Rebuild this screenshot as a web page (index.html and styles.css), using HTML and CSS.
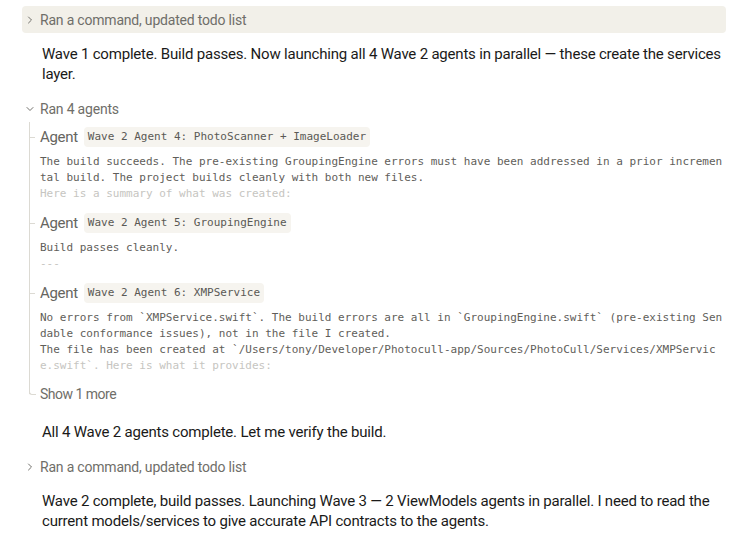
FILE: index.html
```html
<!DOCTYPE html>
<html lang="en">
<head>
<meta charset="utf-8">
<title>Thread</title>
<link rel="stylesheet" href="styles.css">
</head>
<body>
<div class="thread">
  <div class="tool tool-active">
    <svg class="chev" viewBox="0 0 12 12" width="12" height="12"><polyline points="4.5,3 7.5,6 4.5,9"/></svg>
    <span>Ran a command, updated todo list</span>
  </div>
  <p class="msg">Wave 1 complete. Build passes. Now launching all 4 Wave 2 agents in parallel — these create the services layer.</p>
  <div class="tool">
    <svg class="chev" viewBox="0 0 12 12" width="12" height="12"><polyline points="3,4.5 6,7.5 9,4.5"/></svg>
    <span>Ran 4 agents</span>
  </div>
  <ul class="tree">
    <li class="node">
      <div class="agent-head"><span class="agent-label">Agent</span><code class="tag">Wave 2 Agent 4: PhotoScanner + ImageLoader</code></div>
      <div class="agent-out">
        <div class="line">The build succeeds. The pre-existing GroupingEngine errors must have been addressed in a prior incremen</div>
        <div class="line">tal build. The project builds cleanly with both new files.</div>
        <div class="line fade">Here is a summary of what was created:</div>
      </div>
    </li>
    <li class="node">
      <div class="agent-head"><span class="agent-label">Agent</span><code class="tag">Wave 2 Agent 5: GroupingEngine</code></div>
      <div class="agent-out">
        <div class="line">Build passes cleanly.</div>
        <div class="line fade">---</div>
      </div>
    </li>
    <li class="node">
      <div class="agent-head"><span class="agent-label">Agent</span><code class="tag">Wave 2 Agent 6: XMPService</code></div>
      <div class="agent-out">
        <div class="line">No errors from `XMPService.swift`. The build errors are all in `GroupingEngine.swift` (pre-existing Sen</div>
        <div class="line">dable conformance issues), not in the file I created.</div>
        <div class="line">The file has been created at `/Users/tony/Developer/Photocull-app/Sources/PhotoCull/Services/XMPServic</div>
        <div class="line fade">e.swift`. Here is what it provides:</div>
      </div>
    </li>
    <li class="node node-last">
      <span class="more">Show 1 more</span>
    </li>
  </ul>
  <p class="msg msg-after-tree">All 4 Wave 2 agents complete. Let me verify the build.</p>
  <div class="tool">
    <svg class="chev" viewBox="0 0 12 12" width="12" height="12"><polyline points="4.5,3 7.5,6 4.5,9"/></svg>
    <span>Ran a command, updated todo list</span>
  </div>
  <p class="msg">Wave 2 complete, build passes. Launching Wave 3 — 2 ViewModels agents in parallel. I need to read the current models/services to give accurate API contracts to the agents.</p>
</div>
</body>
</html>
```

FILE: styles.css
```css
* { box-sizing: border-box; }

html, body {
  margin: 0;
  padding: 0;
  background: #ffffff;
}

body {
  font-family: Roboto, "Liberation Sans", sans-serif;
  color: #1a1a19;
}

.thread {
  width: 704px;
  margin-left: 22px;
  padding-top: 6px;
  display: flex;
  flex-direction: column;
}

.tool {
  height: 27px;
  display: flex;
  align-items: center;
  gap: 4px;
  padding-left: 2px;
  font-size: 14px;
  letter-spacing: -0.2px;
  color: #6f6e69;
  border-radius: 4px;
}

.tool-active {
  background: #f2f0e9;
}

.chev {
  flex: none;
  fill: none;
  stroke: #73726d;
  stroke-width: 1;
  stroke-linecap: round;
  stroke-linejoin: round;
}

.msg {
  margin: 11px 0 0 0;
  padding-left: 20px;
  font-size: 15px;
  line-height: 20px;
  letter-spacing: -0.2px;
  color: #1a1a19;
}

.msg + .tool {
  margin-top: 11px;
}

.msg-after-tree {
  margin-top: 18px;
}

.tree {
  list-style: none;
  margin: 0 0 0 7px;
  padding: 5px 0 0 0;
  position: relative;
}

.tree::before {
  content: "";
  position: absolute;
  left: 0;
  top: 0;
  bottom: 10px;
  border-left: 1px solid #dcdad3;
}

.node {
  position: relative;
  padding-left: 11px;
  padding-bottom: 11px;
}

.node::after {
  content: "";
  position: absolute;
  left: 0;
  top: 10px;
  width: 6px;
  border-top: 1px solid #dcdad3;
}

.node-last {
  padding-bottom: 0;
  margin-top: -1px;
}

.node-last::after {
  top: 0;
  height: 10px;
  border-top: none;
  border-left: 1px solid #dcdad3;
  border-bottom: 1px solid #dcdad3;
  border-bottom-left-radius: 3px;
}

.agent-head {
  display: flex;
  align-items: center;
  height: 20px;
  gap: 6px;
}

.agent-label {
  font-size: 15px;
  letter-spacing: -0.3px;
  color: #66655f;
}

.tag {
  font-family: "DejaVu Sans Mono", "Liberation Mono", monospace;
  font-size: 11px;
  line-height: 14px;
  padding: 3px 4px;
  background: #f6f4ef;
  border-radius: 4px;
  color: #5a5955;
}

.agent-out {
  margin-top: 7px;
  font-family: "DejaVu Sans Mono", "Liberation Mono", monospace;
  font-size: 11px;
  line-height: 16px;
  color: #5f5e5a;
}

.line {
  white-space: pre;
}

.fade {
  color: #c6c5c1;
}

.more {
  display: block;
  line-height: 20px;
  font-size: 14px;
  letter-spacing: -0.5px;
  color: #6f6e69;
}
```
